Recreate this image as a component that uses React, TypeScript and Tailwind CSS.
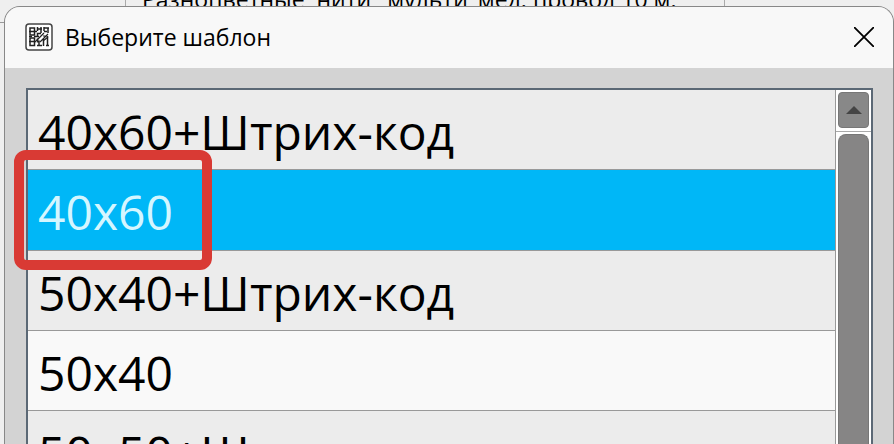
import clsx from "clsx";
import { useState } from "react";

const templates = [
  "40x60+Штрих-код",
  "40x60",
  "50x40+Штрих-код",
  "50x40",
  "50x50+Штрих-код",
];

const AppIcon = () => (
  <svg viewBox="0 0 28 28" className="size-7" fill="none" aria-hidden="true">
    <rect x="1" y="1" width="26" height="26" rx="3" fill="#fff" stroke="#444" strokeWidth="1.5" />
    <g stroke="#222" strokeWidth="1.5">
      <rect x="5" y="5" width="4.5" height="7" />
      <rect x="5" y="15" width="4.5" height="7.5" />
      <path d="M4 8.5h8M4 18.5h7M4 13.5h3M9 13.5h5" />
      <path d="M12.5 4v4M12.5 10v3M12 6h5M16 4v6M12 10.5h4M19 5h5M19 4v4M23 5v5M19 8.5h3" />
      <path d="M12.5 15.5v4M12 22.5h5M14 17.5v5M18.5 16v7M22.5 13v10M21 22.5h3" />
      <path d="M11 18l8-8M15 19l8-8M18 13h4M18 18l5-4" strokeWidth="1.2" />
    </g>
  </svg>
);

const CloseIcon = () => (
  <svg viewBox="0 0 20 20" className="size-5" fill="none" stroke="#000" strokeWidth="1.8" aria-hidden="true">
    <path d="M0 0l20 20M20 0L0 20" />
  </svg>
);

const ScrollBar = () => (
  <div className="flex w-9 shrink-0 flex-col border-l border-[#999] bg-white">
    <div className="border-b border-[#aaa] px-[2px] pt-[2px] pb-[3px]">
      <button
        type="button"
        aria-label="Прокрутить вверх"
        className="flex h-9 w-full items-center justify-center rounded-[4px] border border-[#777] bg-[#888]"
      >
        <svg viewBox="0 0 16 8" className="h-2 w-4" aria-hidden="true">
          <path d="M8 0l8 8H0z" fill="#444" />
        </svg>
      </button>
    </div>
    <div className="flex grow px-[2px] pt-[2px]">
      <div className="grow rounded-t-[8px] border border-b-0 border-[#777] bg-[#868585]" />
    </div>
  </div>
);

const App = () => {
  const [selected, setSelected] = useState(1);

  return (
    <div className="relative flex h-screen flex-col overflow-hidden bg-[#efefef] pt-[6px] pl-1 font-['Open_Sans','Noto_Sans',sans-serif] text-black">
      {/* the window behind the dialog */}
      <div className="absolute inset-x-0 top-0 flex h-[23px] border-b border-[#999]">
        <div className="ml-[125px] flex h-full w-[600px] items-end border-x border-[#aaa] pl-4">
          <p className="mb-[11px] text-[23px] leading-6 whitespace-pre">
            {"Разноцветные  нити _мульти_мед. провод 10 м."}
          </p>
        </div>
      </div>

      <section
        role="dialog"
        aria-labelledby="dialog-title"
        className="relative flex min-h-0 grow flex-col overflow-hidden rounded-t-[16px] border border-b-0 border-[#888] bg-[#d3d3d3]"
      >
        <header className="flex h-[61px] shrink-0 items-center bg-[#f8f8f8] pr-[19px] pb-[2px] pl-5">
          <AppIcon />
          <h1 id="dialog-title" className="ml-3 grow text-[23px] leading-8">
            Выберите шаблон
          </h1>
          <button type="button" aria-label="Закрыть">
            <CloseIcon />
          </button>
        </header>

        <div className="mt-5 mr-5 ml-[21px] flex min-h-0 grow border-2 border-b-0 border-[#5b6875]">
          <div role="listbox" aria-label="Шаблоны" className="min-w-0 grow">
            {templates.map((name, index) => (
              <button
                key={name}
                type="button"
                role="option"
                aria-selected={selected === index}
                onClick={() => setSelected(index)}
                className={clsx(
                  "relative flex w-full items-center border-b border-[#999] px-[10px] pt-1 text-left text-[48px] leading-none whitespace-nowrap",
                  selected === index
                    ? "h-[81px] bg-[#00b7f7] text-[#d5f6ff]"
                    : index % 2
                      ? "h-20 bg-[#f9f9f9]"
                      : "h-20 bg-[#ececec]"
                )}
              >
                {name}
                {index === 1 && (
                  <span className="absolute -top-5 -bottom-5 -left-[14px] z-10 w-[198px] rounded-[12px] border-10 border-[#d93a34]" />
                )}
              </button>
            ))}
          </div>
          <ScrollBar />
        </div>
      </section>
    </div>
  );
};

export default App;
